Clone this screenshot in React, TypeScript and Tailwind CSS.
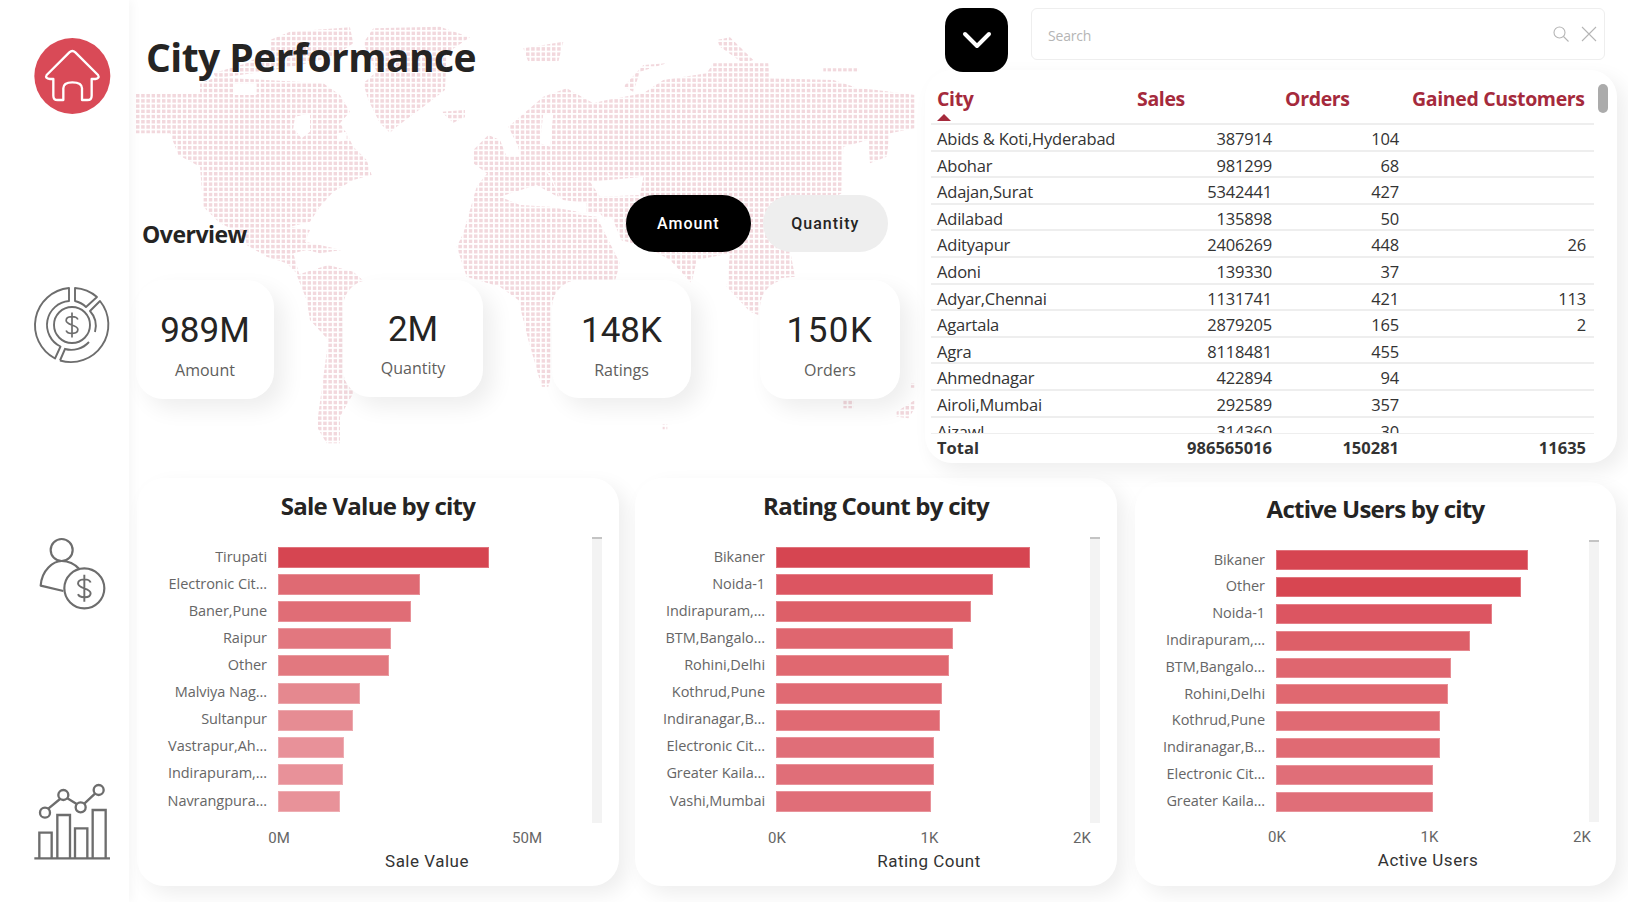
import React from "react";

const segoe = "font-['Open_Sans',sans-serif]";
const din = "font-['Roboto',sans-serif]";

type Bar = { label: string; width: number; color: string };

const saleBars: Bar[] = [
  { label: "Tirupati", width: 211, color: "#d64551" },
  { label: "Electronic Cit...", width: 142, color: "#df6a73" },
  { label: "Baner,Pune", width: 133, color: "#e06d76" },
  { label: "Raipur", width: 113, color: "#e2777f" },
  { label: "Other", width: 111, color: "#e2787f" },
  { label: "Malviya Nag...", width: 82, color: "#e5888f" },
  { label: "Sultanpur", width: 75, color: "#e68c93" },
  { label: "Vastrapur,Ah...", width: 66, color: "#e89199" },
  { label: "Indirapuram,...", width: 65, color: "#e89199" },
  { label: "Navrangpura...", width: 62, color: "#e89299" },
];

const ratingBars: Bar[] = [
  { label: "Bikaner", width: 254, color: "#d64551" },
  { label: "Noida-1", width: 217, color: "#dc5561" },
  { label: "Indirapuram,...", width: 195, color: "#dd5f68" },
  { label: "BTM,Bangalo...", width: 177, color: "#df666f" },
  { label: "Rohini,Delhi", width: 173, color: "#e06870" },
  { label: "Kothrud,Pune", width: 166, color: "#e06a73" },
  { label: "Indiranagar,B...", width: 164, color: "#e06a73" },
  { label: "Electronic Cit...", width: 158, color: "#e06e78" },
  { label: "Greater Kaila...", width: 158, color: "#e06e78" },
  { label: "Vashi,Mumbai", width: 155, color: "#e06e78" },
];

const userBars: Bar[] = [
  { label: "Bikaner", width: 252, color: "#d64551" },
  { label: "Other", width: 245, color: "#d74651" },
  { label: "Noida-1", width: 216, color: "#dc5561" },
  { label: "Indirapuram,...", width: 194, color: "#dd5f68" },
  { label: "BTM,Bangalo...", width: 175, color: "#df666f" },
  { label: "Rohini,Delhi", width: 172, color: "#e06870" },
  { label: "Kothrud,Pune", width: 164, color: "#e06a73" },
  { label: "Indiranagar,B...", width: 164, color: "#e06a73" },
  { label: "Electronic Cit...", width: 157, color: "#e06e78" },
  { label: "Greater Kaila...", width: 157, color: "#e06e78" },
];

const rows = [
  ["Abids & Koti,Hyderabad", "387914", "104", ""],
  ["Abohar", "981299", "68", ""],
  ["Adajan,Surat", "5342441", "427", ""],
  ["Adilabad", "135898", "50", ""],
  ["Adityapur", "2406269", "448", "26"],
  ["Adoni", "139330", "37", ""],
  ["Adyar,Chennai", "1131741", "421", "113"],
  ["Agartala", "2879205", "165", "2"],
  ["Agra", "8118481", "455", ""],
  ["Ahmednagar", "422894", "94", ""],
  ["Airoli,Mumbai", "292589", "357", ""],
  ["Aizawl", "314360", "30", ""],
];

const kpis = [
  { value: "989M", label: "Amount", box: "w-[138px] h-[119px] pt-[31px]", num: "", gap: "mt-[8px]" },
  { value: "2M", label: "Quantity", box: "w-[140px] h-[117px] pt-[30px]", num: "", gap: "mt-[7px]" },
  { value: "148K", label: "Ratings", box: "w-[139px] h-[118px] pt-[31px]", num: "", gap: "mt-[8px]" },
  { value: "150K", label: "Orders", box: "w-[140px] h-[119px] pt-[31px]", num: "tracking-[1.5px]", gap: "mt-[8px]" },
];

// continents traced from the reference, first group in left crop coords, second in right crop coords
const northAmerica =
  "408,282 600,282 600,250 650,232 800,240 970,250 1020,285 1050,335 1020,370 1040,400 1060,440 1100,480 1115,525 1060,540 1000,575 960,620 930,665 870,680 930,690 915,725 960,735 1025,750 960,760 920,750 880,760 900,830 860,790 800,770 740,735 735,705 660,670 610,620 600,500 535,465 510,400 408,400";
const arctic =
  "810,120 870,95 1050,82 1060,130 1000,170 900,195 790,215 650,235 640,220 740,190 810,150";
const greenland =
  "1090,130 1120,85 1320,80 1410,112 1340,160 1335,270 1290,305 1190,380 1170,398 1140,370 1105,300 1090,250 1130,215";
const iceland = "1325,335 1395,330 1395,352 1360,368 1340,350";
const southAmerica =
  "890,825 985,795 1060,815 1110,860 1200,900 1180,1000 1100,1070 1060,1180 1020,1250 1020,1330 980,1330 950,1280 965,1170 985,1020 930,960 920,900";
const eurasia =
  "25,380 130,290 200,265 280,310 320,300 430,280 490,240 620,220 640,190 805,190 810,235 1000,240 1075,265 1130,270 1245,285 1245,385 1170,400 1160,470 1110,490 1105,420 1030,440 1025,580 985,600 870,750 885,830 840,835 775,945 750,935 680,860 690,760 590,780 575,850 510,780 440,740 360,720 300,640 200,640 150,520 60,480 55,440";
const africa =
  "-70,560 0,470 100,470 150,530 200,640 290,650 360,790 340,860 260,930 190,1000 145,1160 125,1160 85,1020 55,900 0,860 -100,830 -130,740 -110,700";
const britain = "-35,405 -80,450 -80,490 -40,520 0,520 20,470 0,420";
const iceNorth = "70,145 190,125 175,185 85,185";
const novaya = "370,260 430,195 500,190 420,215 400,275";
const northCape = "650,120 690,112 760,180 730,190 660,140";
const taymyr = "970,205 1075,205 1075,215 970,215";
const oz = "1030,1200 1060,1200 1060,1225 1030,1225";
const oz2 = "1190,1250 1190,1235 1245,1200 1245,1225 1225,1255";
const oz3 = "1232,1150 1245,1150 1245,1163 1232,1163";
const speck = "488,1274 502,1274 502,1288 488,1288";

const leftSeas = ["885,350 930,340 930,395 905,415 880,385", "1010,400 1040,395 1040,420 1015,425", "700,250 770,250 770,285 700,285"];
const rightSeas = [
  "0,590 110,555 190,600 260,610 260,640 150,620 60,615",
  "270,545 430,530 420,585 300,590",
  "310,650 335,650 385,770 365,790",
  "130,340 160,340 150,440 120,430",
  "480,660 520,690 540,760 500,740",
];

const WorldMap = () => (
  <svg className="absolute left-0 top-0 pointer-events-none" width="1000" height="470" viewBox="0 0 1000 470">
    <defs>
      <pattern id="mapDots" x="136" y="94" width="5.2" height="5.2" patternUnits="userSpaceOnUse">
        <rect width="3.5" height="3.5" fill="#f2d8dd" />
      </pattern>
      <clipPath id="mapLand">
        {[northAmerica, arctic, greenland, iceland, southAmerica].map((p, i) => (
          <polygon key={i} points={p} transform="scale(0.3333)" />
        ))}
        {[eurasia, africa, britain, iceNorth, novaya, northCape, taymyr, oz, oz2, oz3, speck].map((p, i) => (
          <polygon key={i} points={p} transform="translate(500 0) scale(0.3333)" />
        ))}
      </clipPath>
    </defs>
    <rect width="1000" height="470" fill="url(#mapDots)" clipPath="url(#mapLand)" />
    {leftSeas.map((p, i) => (
      <polygon key={i} points={p} fill="#fff" transform="scale(0.3333)" />
    ))}
    {rightSeas.map((p, i) => (
      <polygon key={i} points={p} fill="#fff" transform="translate(500 0) scale(0.3333)" />
    ))}
  </svg>
);

const HomeIcon = () => (
  <svg width="100" height="100" viewBox="0 0 300 300" fill="none">
    <circle cx="157" cy="153" r="114" fill="#d94a57" />
    <path
      d="M80 150 L148 82 Q157 74 166 82 L234 150 Q240 160 226 162 L215 162 L215 212 Q215 225 202 225 L186 225 L186 190 Q186 172 157 172 Q130 172 130 190 L130 225 L113 225 Q100 225 100 212 L100 162 L90 162 Q74 160 80 150 Z"
      stroke="#fff"
      strokeWidth="7"
      strokeLinejoin="round"
    />
  </svg>
);

const DollarGlyph = ({ scale = 1, weight = 1.7 }: { scale?: number; weight?: number }) => (
  <g transform={`scale(${scale})`} strokeWidth={weight}>
    <path d="M6.5 -6 C5 -10.5 -6.5 -10.5 -6.5 -5 C-6.5 0.5 6.5 -0.5 6.5 5 C6.5 10.5 -5 10.5 -6.5 6 M0 -14 L0 14" />
  </g>
);

const RevenueIcon = () => (
  <svg width="100" height="110" viewBox="0 0 100 110" fill="none" stroke="#6d6d6d" strokeWidth="1.9">
    <g transform="translate(52 55)">
      <path d="M-3 -37 A37.5 37.5 0 0 0 -17 33.5 L-11.5 21.5 A24 24 0 0 1 -3 -24 Z" strokeLinejoin="round" />
      <path d="M-12 35.5 A37.5 37.5 0 0 0 28 -24 L18 -14 A22.5 22.5 0 0 1 23 7" strokeLinejoin="round" />
      <path d="M-12 35.5 L-7 24 A24 24 0 0 0 17 17" />
      <path d="M3 -37 A37.5 37.5 0 0 1 25 -28 L14 -18 A23 23 0 0 0 3 -24 Z" strokeLinejoin="round" />
      <circle r="18" />
      <DollarGlyph scale={0.9} weight={1.9} />
    </g>
  </svg>
);

const CustomerIcon = () => (
  <svg width="100" height="100" viewBox="0 0 300 300" fill="none" stroke="#6d6d6d" strokeWidth="6.5">
    <circle cx="125" cy="75" r="33" />
    <path d="M130 198 L62 182 C65 135 100 108 125 108 C145 108 165 118 178 132" strokeLinejoin="round" />
    <circle cx="193" cy="190" r="60" />
    <g transform="translate(193 190)">
      <DollarGlyph scale={2.9} weight={2} />
    </g>
  </svg>
);

const TrendIcon = () => (
  <svg width="100" height="100" viewBox="0 0 300 300" fill="none" stroke="#6d6d6d" strokeWidth="7">
    <path d="M43 265 L270 265" />
    <path d="M58 265 V188 H95 V265 M112 265 V135 H150 V265 M165 265 V175 H202 V265 M218 265 V120 H257 V265" />
    <circle cx="75" cy="128" r="15" />
    <circle cx="130" cy="75" r="15" />
    <circle cx="182" cy="112" r="15" />
    <circle cx="236" cy="60" r="15" />
    <path d="M85 116 L120 87 M142 85 L170 102 M193 101 L225 71" />
  </svg>
);

const Sidebar = () => (
  <aside className="relative z-10 flex h-[902px] w-[129px] shrink-0 flex-col gap-[145px] bg-white pl-[20px] pt-[25px] shadow-[3px_0_10px_rgba(0,0,0,0.04)]">
    <HomeIcon />
    <RevenueIcon />
    <CustomerIcon />
    <TrendIcon />
  </aside>
);

const KpiCard = ({ value, label, box, num, gap }: (typeof kpis)[number]) => (
  <div className={`${box} flex shrink-0 flex-col items-center rounded-[27px] bg-white shadow-[10px_10px_22px_rgba(0,0,0,0.07)]`}>
    <div className={`${din} ${num} text-[35px] leading-[40px] text-[#252423]`}>{value}</div>
    <div className={`${segoe} ${gap} text-[16px] leading-[22px] text-[#605e5c]`}>{label}</div>
  </div>
);

const ChartCard = ({
  title,
  bars,
  ticks,
  tickWidth,
  axisTitle,
  axisClass,
  box,
  rowClass,
  barClass,
  titleClass,
  plotClass,
}: {
  title: string;
  bars: Bar[];
  ticks: string[];
  tickWidth: string;
  axisTitle: string;
  axisClass: string;
  box: string;
  rowClass: string;
  barClass: string;
  titleClass: string;
  plotClass: string;
}) => (
  <div className={`${box} shrink-0 rounded-[27px] bg-white shadow-[8px_8px_20px_rgba(0,0,0,0.07)]`}>
    <h3 className={`${segoe} ${titleClass} text-center text-[24px] font-bold tracking-[-0.75px] text-[#252423]`}>{title}</h3>
    <div className={`${plotClass} flex justify-between pr-[17px]`}>
      <div className="flex flex-col pt-[7px]">
        {bars.map((b) => (
          <div key={b.label} className={`${rowClass} flex items-center gap-[11px]`}>
            <span className={`${segoe} -mt-[2px] w-[130px] text-right text-[14.5px] tracking-[-0.05px] text-[#666666]`}>{b.label}</span>
            <span
              className={`${barClass} outline outline-1 -outline-offset-1 outline-[#ffffff40]`}
              style={{ width: b.width, backgroundColor: b.color }}
            />
          </div>
        ))}
      </div>
      <div className="w-[10px] bg-[#f3f3f3]">
        <div className="h-[2px] bg-[#c4c4c4]" />
      </div>
    </div>
    <div className={`${tickWidth} ml-[122px] mt-[5px] flex h-[20px] items-center justify-between`}>
      {ticks.map((t) => (
        <span key={t} className={`${din} w-[40px] text-center text-[15px] text-[#666666]`}>
          {t}
        </span>
      ))}
    </div>
    <div className={`${din} ${axisClass} mt-[1px] text-center text-[17px] leading-[24px] tracking-[0.5px] text-[#333333]`}>{axisTitle}</div>
  </div>
);

const CityTable = () => (
  <div className="relative h-[393px] w-[692px] rounded-[27px] bg-white pl-[6px] shadow-[8px_8px_20px_rgba(0,0,0,0.07)]">
    <div className={`${segoe} grid h-[55px] w-[663px] grid-cols-[200px_148px_127px_1fr] border-b-2 border-[#eeeeee] pl-[6px] pt-[16px] text-[19.5px] font-bold leading-[26px] tracking-[-0.35px] text-[#a52a3c]`}>
      <div className="flex flex-col items-start">
        <span>City</span>
        <svg width="14" height="7" viewBox="0 0 14 7" className="mt-[2px]">
          <path d="M7 0 L14 7 H0 Z" fill="#a52a3c" />
        </svg>
      </div>
      <span>Sales</span>
      <span>Orders</span>
      <span>Gained Customers</span>
    </div>
    <div className={`${segoe} h-[308px] w-[663px] overflow-hidden text-[16.5px] tracking-[-0.2px] text-[#333333]`}>
      {rows.map((r) => (
        <div key={r[0]} className="grid h-[26.6px] grid-cols-[200px_135px_127px_187px] items-center border-b-2 border-[#eeeeee] pl-[6px] pt-[2px]">
          <span className="whitespace-nowrap">{r[0]}</span>
          <span className="text-right">{r[1]}</span>
          <span className="text-right">{r[2]}</span>
          <span className="text-right">{r[3]}</span>
        </div>
      ))}
    </div>
    <div className={`${segoe} grid h-[28px] w-[663px] grid-cols-[200px_135px_127px_187px] items-center border-t border-[#eeeeee] pl-[6px] pt-[1px] text-[16.5px] font-bold text-[#333333]`}>
      <span>Total</span>
      <span className="text-right">986565016</span>
      <span className="text-right">150281</span>
      <span className="text-right">11635</span>
    </div>
    <div className="absolute right-[9px] top-[14px] h-[29px] w-[10px] rounded-full bg-[#ababab]" />
  </div>
);

const App = () => (
  <div className="relative flex h-[902px] w-[1628px] overflow-hidden bg-white">
    <WorldMap />
    <Sidebar />
    <main className="relative flex flex-1 flex-col">
      <section className="flex h-[478px]">
        <div className="flex w-[796px] flex-col pl-[7px]">
          <h1 className={`${segoe} ml-[10px] mt-[29px] h-[55px] text-[39px] font-bold leading-[55px] tracking-[-0.55px] text-[#252423]`}>City Performance</h1>
          <div className="mt-[111px] flex h-[57px] items-center">
            <h2 className={`${segoe} ml-[6px] mt-[21px] text-[23px] font-bold tracking-[-0.5px] text-[#252423]`}>Overview</h2>
            <button className={`${din} ml-[379px] h-[57px] w-[125px] rounded-full bg-black text-[16px] font-medium tracking-[1px] text-white`}>Amount</button>
            <button className={`${din} ml-[12px] h-[57px] w-[125px] rounded-full bg-[#eeeeee] text-[16px] font-medium tracking-[1px] text-[#252423]`}>Quantity</button>
          </div>
          <div className="mt-[28px] flex gap-[69px]">
            {kpis.map((k) => (
              <KpiCard key={k.label} {...k} />
            ))}
          </div>
        </div>
        <div className="flex flex-col">
          <div className="flex h-[70px] items-start gap-[23px] pl-[20px] pt-[8px]">
            <div className="relative z-10 flex h-[64px] w-[63px] items-center justify-center rounded-[18px] bg-black">
              <svg width="30" height="18" viewBox="0 0 30 18" fill="none">
                <path d="M3 3 L15 15 L27 3" stroke="#fff" strokeWidth="4" strokeLinecap="round" strokeLinejoin="round" />
              </svg>
            </div>
            <div className="flex h-[52px] w-[574px] items-center justify-between rounded-[6px] border border-[#eeeeee] bg-white pl-[16px] pr-[7px]">
              <span className={`${segoe} pt-[2px] text-[14px] tracking-[-0.2px] text-[#b5b5b5]`}>Search</span>
              <div className="flex items-center gap-[12px]">
                <svg width="16" height="16" viewBox="0 0 16 16" fill="none" stroke="#b5b5b5" strokeWidth="1.1">
                  <circle cx="6.5" cy="6.5" r="5.5" />
                  <path d="M10.5 10.5 L15.5 15.5" />
                </svg>
                <svg width="16" height="16" viewBox="0 0 16 16" fill="none" stroke="#b5b5b5" strokeWidth="1.1">
                  <path d="M1 1 L15 15 M15 1 L1 15" />
                </svg>
              </div>
            </div>
          </div>
          <CityTable />
        </div>
      </section>
      <section className="flex pl-[8px]">
        <ChartCard
          title="Sale Value by city"
          bars={saleBars}
          ticks={["0M", "50M"]}
          tickWidth="w-[288px]"
          axisTitle="Sale Value"
          axisClass="pl-[98px]"
          box="h-[408px] w-[482px]"
          rowClass="h-[27.1px]"
          barClass="h-[21px]"
          titleClass="h-[59px] leading-[56px]"
          plotClass="h-[286px]"
        />
        <ChartCard
          title="Rating Count by city"
          bars={ratingBars}
          ticks={["0K", "1K", "2K"]}
          tickWidth="w-[345px]"
          axisTitle="Rating Count"
          axisClass="pl-[106px]"
          box="ml-[16px] h-[408px] w-[482px]"
          rowClass="h-[27.1px]"
          barClass="h-[21px]"
          titleClass="h-[59px] leading-[56px]"
          plotClass="h-[286px]"
        />
        <ChartCard
          title="Active Users by city"
          bars={userBars}
          ticks={["0K", "1K", "2K"]}
          tickWidth="w-[345px]"
          axisTitle="Active Users"
          axisClass="pl-[105px]"
          box="ml-[18px] mt-[4px] h-[404px] w-[481px]"
          rowClass="h-[26.8px]"
          barClass="h-[20px]"
          titleClass="h-[58px] leading-[54px]"
          plotClass="h-[282px]"
        />
      </section>
    </main>
  </div>
);

export default App;
